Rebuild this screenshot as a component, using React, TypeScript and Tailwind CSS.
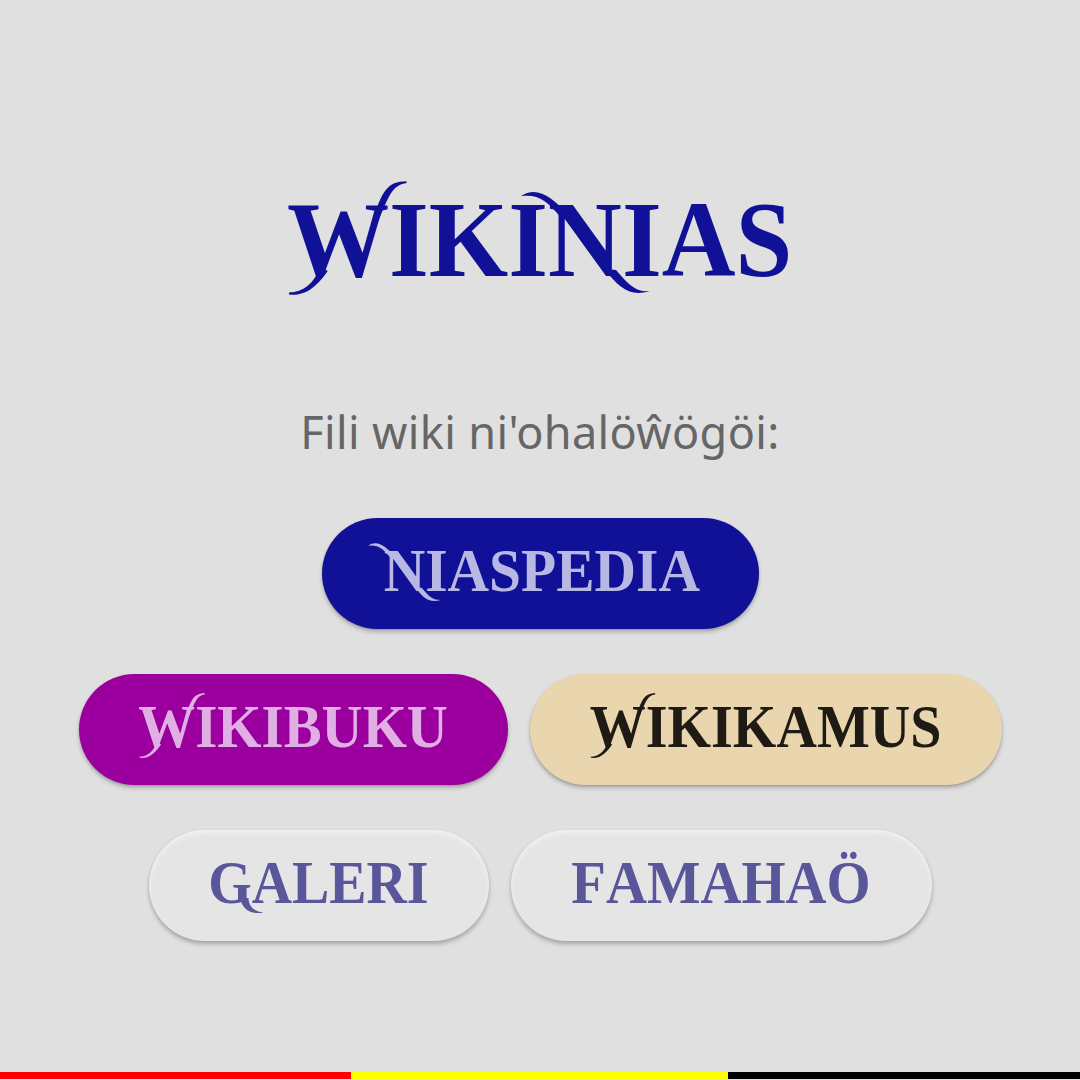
type WikiLink = { label: string; swashes: number[]; pill: string; text: string };

const shadow = 'shadow-[0_3px_4px_rgba(0,0,0,0.22),0_1px_2px_rgba(0,0,0,0.14)]';
const raised =
  'bg-[#e5e5e5] text-[#59569a] shadow-[inset_0_3px_5px_rgba(255,255,255,0.5),0_3px_4px_rgba(0,0,0,0.26),0_0_2px_rgba(0,0,0,0.06)]';

const rows: WikiLink[][] = [
  [{ label: 'NIASPEDIA', swashes: [0], pill: `w-[437px] bg-[#111198] text-[#b8b8e4] ${shadow}`, text: 'ml-[3px] scale-x-[0.942]' }],
  [
    { label: 'WIKIBUKU', swashes: [0], pill: `w-[429px] bg-[#9b009f] text-[#e0b0e4] ${shadow}`, text: 'scale-x-[0.932]' },
    { label: 'WIKIKAMUS', swashes: [0], pill: `w-[472px] bg-[#e9d6af] text-[#1f1a14] ${shadow}`, text: 'scale-x-[0.918]' },
  ],
  [
    { label: 'GALERI', swashes: [0], pill: `w-[340px] ${raised}`, text: 'scale-x-[0.915]' },
    { label: 'FAMAHAÖ', swashes: [], pill: `w-[421px] ${raised}`, text: 'scale-x-[0.93]' },
  ],
];

// Ornamental curls added around a capital, in hundredths of an em.
const curls: Record<string, string[]> = {
  W: [
    'M84 38 C93 12 98 2 117 2 L117 4 C103 5 99 18 90 38 Z',
    'M33 82 C26 98 16 106 2 106 L2 108 C20 110 31 98 40 86 Z',
  ],
  N: [
    'M12 36 C-2 20 -10 14 -27 16 C-12 6 3 16 20 34 Z',
    'M54 84 C70 102 78 110 99 105 C86 105 80 101 66 85 Z',
  ],
  G: ['M57 82 C61 100 74 109 99 106 C84 104 73 98 72 82 Z'],
};

function Wordmark({ text, swashes }: { text: string; swashes: number[] }) {
  return (
    <>
      {text.split('').map((letter, i) =>
        swashes.includes(i) ? (
          <span key={i} className="relative inline-block">
            {letter}
            <svg
              aria-hidden="true"
              viewBox="0 0 100 114"
              fill="currentColor"
              className="absolute top-0 left-0 h-[1.14em] w-[1em] overflow-visible"
            >
              {(curls[letter] ?? []).map((d) => (
                <path key={d} d={d} />
              ))}
            </svg>
          </span>
        ) : (
          letter
        ),
      )}
    </>
  );
}

export default function App() {
  return (
    <div className="flex h-[1080px] w-[1080px] flex-col overflow-hidden bg-[#e0e0e0]">
      <main className="flex flex-1 flex-col items-center pt-[179px]">
        <h1 className="h-[122px] whitespace-nowrap font-['Liberation_Serif',serif] text-[107px] leading-[122px] font-bold text-[#111198]">
          <span className="inline-block scale-x-[0.955] [font-kerning:none]">
            <Wordmark text="WIKINIAS" swashes={[0, 4]} />
          </span>
        </h1>
        <p className="mt-[101px] h-[60px] whitespace-nowrap font-['Noto_Sans','Open_Sans',sans-serif] text-[45px] leading-[60px] tracking-[0.37px] text-[#666666]">
          Fili wiki ni'ohalöŵögöi:
        </p>
        <nav className="mt-[56px] flex flex-col gap-[45px]">
          {rows.map((row) => (
            <div key={row[0].label} className="flex justify-center gap-[22px]">
              {row.map((link) => (
                <button
                  key={link.label}
                  className={`flex h-[111px] items-center justify-center rounded-full pb-[6px] font-['Liberation_Serif',serif] text-[61px] leading-[70px] font-bold ${link.pill}`}
                >
                  <span className={`inline-block whitespace-nowrap [font-kerning:none] ${link.text}`}>
                    <Wordmark text={link.label} swashes={link.swashes} />
                  </span>
                </button>
              ))}
            </div>
          ))}
        </nav>
      </main>
      <footer className="mb-px flex h-[7px]">
        <div className="w-[351px] bg-[#ff0000]" />
        <div className="w-[377px] bg-[#ffff00]" />
        <div className="flex-1 bg-black" />
      </footer>
    </div>
  );
}
